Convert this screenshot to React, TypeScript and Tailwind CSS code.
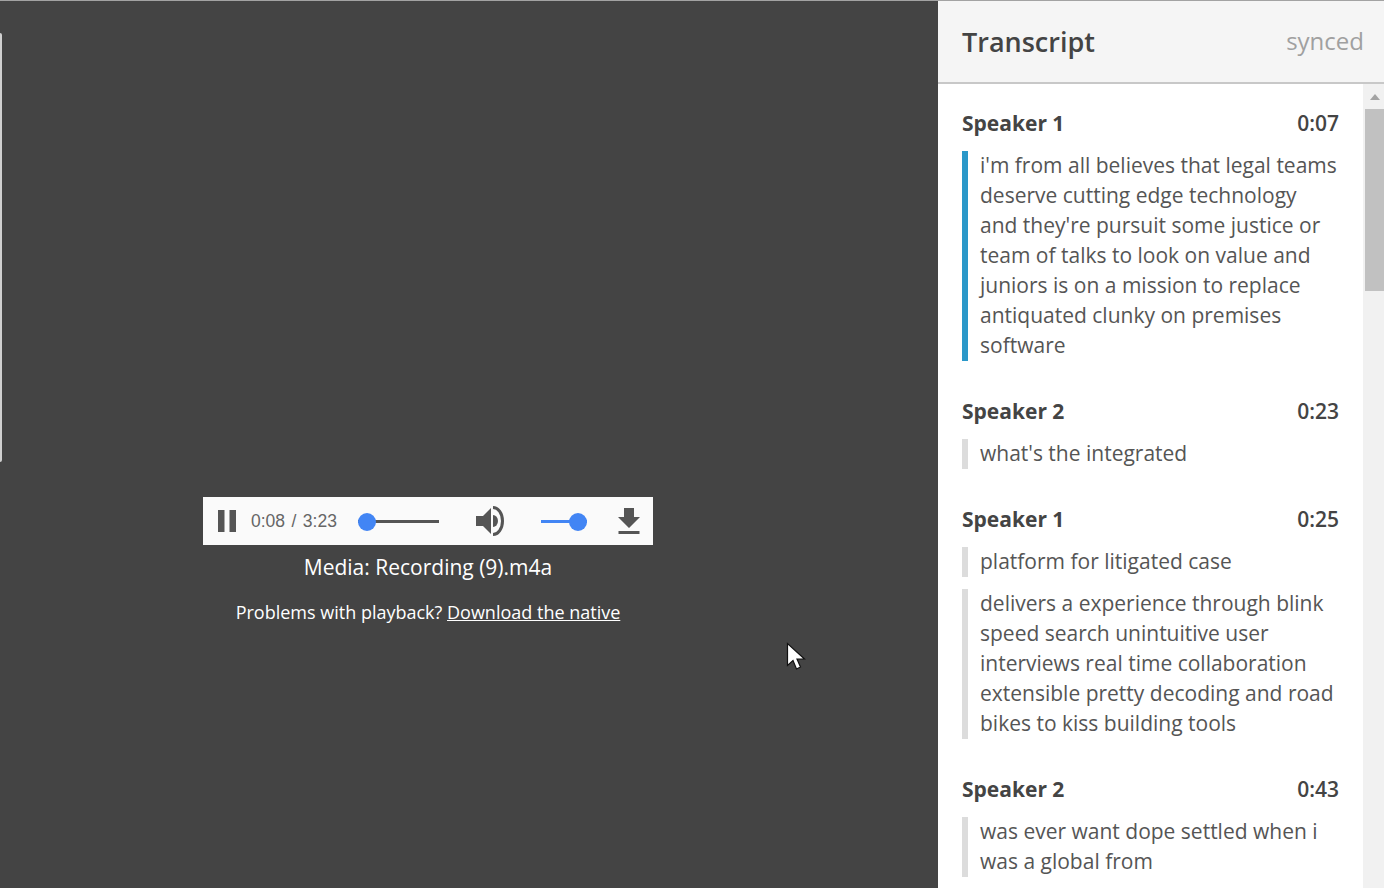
const blocks = [
  {
    speaker: "Speaker 1",
    time: "0:07",
    active: true,
    paragraphs: [
      ["i'm from all believes that legal teams", "deserve cutting edge technology", "and they're pursuit some justice or", "team of talks to look on value and", "juniors is on a mission to replace", "antiquated clunky on premises", "software"],
    ],
  },
  { speaker: "Speaker 2", time: "0:23", paragraphs: [["what's the integrated"]] },
  {
    speaker: "Speaker 1",
    time: "0:25",
    paragraphs: [
      ["platform for litigated case"],
      ["delivers a experience through blink", "speed search unintuitive user", "interviews real time collaboration", "extensible pretty decoding and road", "bikes to kiss building tools"],
    ],
  },
  { speaker: "Speaker 2", time: "0:43", paragraphs: [["was ever want dope settled when i", "was a global from"]] },
];

const Player = () => (
  <div className="flex h-12 w-[450px] items-center bg-[#fafafa] text-[#666666]">
    <svg width="20" height="22" viewBox="0 0 20 22" className="ml-[14px] shrink-0">
      <rect x="1" y="0" width="6.500" height="22" fill="#555" />
      <rect x="12.500" y="0" width="6.500" height="22" fill="#555" />
    </svg>
    <span className="ml-[14px] w-[86px] pt-[2px] font-['Liberation_Sans',sans-serif] text-[17.500px] leading-none whitespace-nowrap [word-spacing:1.600px]">0:08 / 3:23</span>
    <div className="relative ml-[21px] h-[3px] w-[81px] bg-[#555]">
      <div className="absolute top-[-7px] left-0 h-[18px] w-[18px] rounded-full bg-[#4285f4]" />
    </div>
    <svg width="30" height="30" viewBox="0 0 30 30" className="ml-[37px] shrink-0">
      <path d="M0 10h7l8-8v26l-8-8H0z" fill="#555" />
      <path d="M17 9a5 6 0 0 1 0 12z" fill="#555" />
      <path d="M17 1.500a9.500 13.500 0 0 1 0 27" fill="none" stroke="#555" strokeWidth="3" />
    </svg>
    <div className="relative ml-[35px] h-[3px] w-[46px] bg-[#4285f4]">
      <div className="absolute top-[-7px] right-0 h-[18px] w-[18px] rounded-full bg-[#4285f4]" />
    </div>
    <svg width="22" height="26" viewBox="0 0 22 26" className="ml-[31px] shrink-0">
      <path d="M6 0h10v9h6L11 20 0 9h6z" fill="#555" />
      <rect x="0.500" y="23" width="21" height="3" fill="#555" />
    </svg>
  </div>
);

export default function App() {
  return (
    <div className="relative flex h-[888px] w-[1384px] overflow-hidden border-t border-[#a3a3a3] bg-[#444444] font-['Open_Sans',sans-serif]">
      <div className="absolute top-[32px] left-0 h-[429px] w-[2px] rounded-r-sm bg-[#d0d0d0]" />
      <div className="w-[938px] shrink-0 pt-[496px] pl-[203px]">
        <Player />
        <div className="w-[450px] text-center text-white">
          <p className="mt-[7px] text-[21px] leading-[30px]">Media: Recording (9).m4a</p>
          <p className="mt-[15px] text-[18px] leading-[30px]">
            Problems with playback? <span className="underline">Download the native</span>
          </p>
        </div>
      </div>
      <svg width="20" height="30" viewBox="0 0 20 30" className="absolute top-[641px] left-[786px]">
        <path d="M1.500 1.500v22l5.500-5 3.500 8.500 4-2-3.500-8h7.500z" fill="#fff" stroke="#111" strokeWidth="1.200" />
      </svg>
      <div className="flex min-w-0 flex-1 flex-col bg-white">
        <div className="flex h-[83px] shrink-0 items-center justify-between border-b-2 border-[#c8c8c8] bg-[#f5f5f5] pr-5 pl-6">
          <h2 className="mt-[2px] text-[27px] font-semibold text-[#444]">Transcript</h2>
          <span className="mb-[2px] text-[24px] text-[#a0a0a0]">synced</span>
        </div>
        <div className="flex min-h-0 flex-1">
          <div className="min-w-0 flex-1 overflow-hidden px-6 pt-6">
            {blocks.map((block, i) => (
              <div key={i} className="mb-[35px]">
                <div className="flex justify-between text-[21px] leading-[30px] font-bold text-[#444]">
                  <span>{block.speaker}</span>
                  <span className="font-semibold">{block.time}</span>
                </div>
                <div className="mt-[13px] space-y-3">
                  {block.paragraphs.map((lines, j) => (
                    <div
                      key={j}
                      className={
                        block.active
                          ? "border-l-[6px] border-[#2a98c9] pl-3 text-[21px] leading-[30px] text-[#555]"
                          : "border-l-[6px] border-[#dcdcdc] pl-3 text-[21px] leading-[30px] text-[#555]"
                      }
                    >
                      <div className="-translate-y-px">
                        {lines.map((line) => (
                          <div key={line} className="whitespace-nowrap">{line}</div>
                        ))}
                      </div>
                    </div>
                  ))}
                </div>
              </div>
            ))}
          </div>
          <div className="w-[21px] shrink-0 bg-[#f1f1f1] pl-[2px]">
            <div className="flex h-[25px] items-center justify-center">
              <div className="h-0 w-0 border-x-[5px] border-b-[6px] border-x-transparent border-b-[#a3a3a3]" />
            </div>
            <div className="h-[182px] bg-[#c1c1c1]" />
          </div>
        </div>
      </div>
    </div>
  );
}
